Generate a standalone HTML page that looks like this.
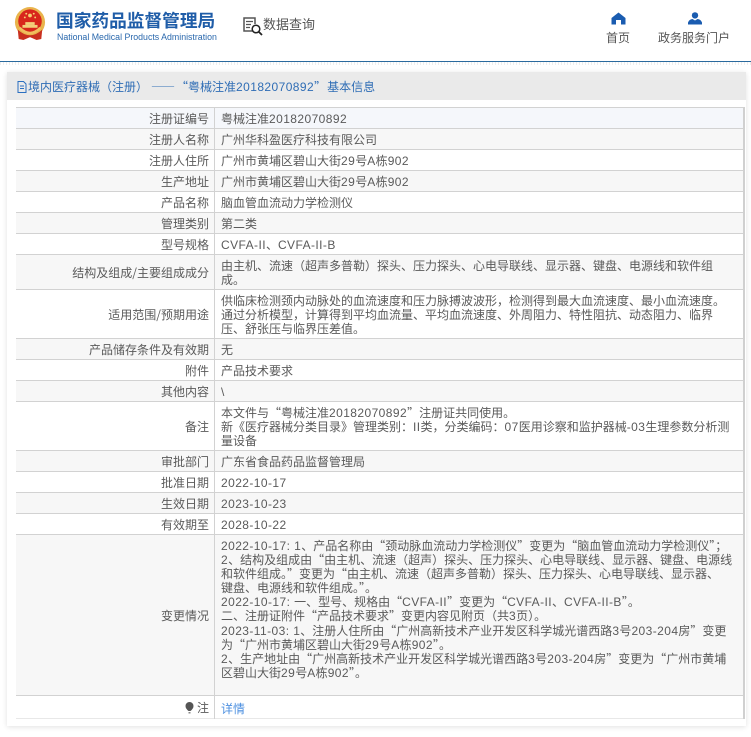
<!DOCTYPE html>
<html lang="zh-CN">
<head>
<meta charset="utf-8">
<title>国家药品监督管理局</title>
<style>
html,body{margin:0;padding:0;background:#fff;}
body{position:relative;width:751px;height:737px;overflow:hidden;font-family:"Noto Sans CJK SC","Liberation Sans",sans-serif;font-size:12px;color:#5a5a5a;}
i{font-style:normal;font-family:"Liberation Sans",sans-serif;letter-spacing:.42px;}
.a{position:absolute;white-space:nowrap;}
.r{position:absolute;left:16px;width:729px;box-sizing:border-box;border-bottom:1px solid #d2d2d2;}
.g{background:#f7f7f7;}
.r .l{position:absolute;right:calc(100% - 193px);white-space:nowrap;line-height:14px;top:50%;margin-top:-6px;}
.t{position:absolute;left:205px;white-space:nowrap;line-height:14.1px;}
</style>
</head>
<body>
<!-- emblem -->
<svg class="a" style="left:14px;top:7px" width="32" height="34" viewBox="0 0 34 36">
<circle cx="17" cy="16" r="16" fill="#e9b44c"/>
<circle cx="17" cy="15" r="12.5" fill="#d8261c"/>
<path d="M4 24Q17 36 30 24L29 34 24 35 17 32 10 35 5 34Z" fill="#c9301f"/>
<path d="M6 22Q17 33 28 22" fill="none" stroke="#f0c060" stroke-width="2.5"/>
<rect x="9" y="19" width="16" height="3" fill="#f3cf7a"/>
<rect x="12" y="16" width="10" height="3" fill="#f3cf7a"/>
<circle cx="17" cy="9" r="2" fill="#f6d271"/>
<circle cx="11.5" cy="11" r="1" fill="#f6d271"/>
<circle cx="22.5" cy="11" r="1" fill="#f6d271"/>
<circle cx="13" cy="7" r="1" fill="#f6d271"/>
<circle cx="21" cy="7" r="1" fill="#f6d271"/>
</svg>
<div class="a" style="left:56px;top:8px;font-size:17.7px;line-height:24px;font-weight:bold;color:#1f5da8">国家药品监督管理局</div>
<div class="a" style="left:57px;top:31px;font-family:'Liberation Sans',sans-serif;font-size:8.8px;line-height:13px;color:#2a68ad">National Medical Products Administration</div>

<!-- search icon -->
<svg class="a" style="left:242px;top:16px" width="22" height="21" viewBox="0 0 22 21" fill="none" stroke="#555">
<path d="M11 15H2V2H13V8" stroke-width="1.5"/>
<path d="M4 5.500H11M4 8.500H9M4 11.500H8" stroke-width="1.2"/>
<circle cx="14" cy="13" r="3.800" stroke="#222" stroke-width="1.500"/>
<path d="M17 16L20 19" stroke="#222" stroke-width="1.800"/>
</svg>
<div class="a" style="left:263px;top:14px;font-size:13px;line-height:20px;color:#555">数据查询</div>

<!-- nav -->
<svg class="a" style="left:611px;top:12px" width="15" height="13" viewBox="0 0 15 13"><path d="M7.500 0.500L14.500 6V12.500H10V8H5V12.500H.5V6Z" fill="#1a5cb0"/></svg>
<div class="a" style="left:606px;top:30px;font-size:12px;line-height:16px;color:#555">首页</div>
<svg class="a" style="left:688px;top:12px" width="14" height="13" viewBox="0 0 14 13"><circle cx="7" cy="3.400" r="3.200" fill="#1a5cb0"/><path d="M0 12.500V10.500Q1 7.500 4.500 7L7 8.500 9.500 7Q13 7.500 14 10.500V12.500Z" fill="#1a5cb0"/></svg>
<div class="a" style="left:658px;top:30px;font-size:12px;line-height:16px;color:#555">政务服务门户</div>

<!-- header line -->
<div class="a" style="left:0;top:61px;width:751px;height:1px;background:#2a6a9e"></div>
<div class="a" style="left:0;top:62px;width:751px;height:3px;background:repeating-linear-gradient(90deg,#eee 0 1px,#fff 1px 3px)"></div>

<!-- panel -->
<div class="a" style="left:7px;top:72px;width:739px;height:654px;background:#fff;box-shadow:0 1px 5px rgba(0,0,0,.12)"></div>
<div class="a" style="left:7px;top:72px;width:739px;height:28px;background:#eaeaea"></div>
<svg class="a" style="left:17px;top:81px" width="10" height="12" viewBox="0 0 10 12" fill="none" stroke="#2a6fc0"><path d="M1 .5H6.500L9 3V11.500H1ZM3 5H7M3 7.500H7"/></svg>
<div class="a" style="left:28px;top:78px;font-size:12px;line-height:17px;color:#2f6db5">境内医疗器械（注册）<span style="margin-left:3px;letter-spacing:1px">——</span>“粤械注准<i>20182070892</i>”<span style="margin-left:1px">基本信息</span></div>

<!-- table -->
<div class="a" style="left:16px;top:107px;width:729px;height:1px;background:#d2d2d2"></div>
<div class="r" style="top:108px;height:21px;background:#f5f7fb"><span class="l">注册证编号</span><div class="t" style="top:4px">粤械注准<i>20182070892</i></div></div>
<div class="r g" style="top:129px;height:21px"><span class="l">注册人名称</span><div class="t" style="top:4px">广州华科盈医疗科技有限公司</div></div>
<div class="r" style="top:150px;height:21px"><span class="l">注册人住所</span><div class="t" style="top:4px">广州市黄埔区碧山大街<i>29</i>号<i>A</i>栋<i>902</i></div></div>
<div class="r g" style="top:171px;height:21px"><span class="l">生产地址</span><div class="t" style="top:4px">广州市黄埔区碧山大街<i>29</i>号<i>A</i>栋<i>902</i></div></div>
<div class="r" style="top:192px;height:21px"><span class="l">产品名称</span><div class="t" style="top:4px">脑血管血流动力学检测仪</div></div>
<div class="r g" style="top:213px;height:21px"><span class="l">管理类别</span><div class="t" style="top:4px">第二类</div></div>
<div class="r" style="top:234px;height:21px"><span class="l">型号规格</span><div class="t" style="top:4px"><i>CVFA-II</i>、<i>CVFA-II-B</i></div></div>
<div class="r g" style="top:255px;height:35px"><span class="l">结构及组成/主要组成成分</span><div class="t" style="top:4px">由主机、流速（超声多普勒）探头、压力探头、心电导联线、显示器、键盘、电源线和软件组<br>成。</div></div>
<div class="r" style="top:290px;height:49px"><span class="l">适用范围/预期用途</span><div class="t" style="top:4px">供临床检测颈内动脉处的血流速度和压力脉搏波波形，检测得到最大血流速度、最小血流速度。<br>通过分析模型，计算得到平均血流量、平均血流速度、外周阻力、特性阻抗、动态阻力、临界<br>压、舒张压与临界压差值。</div></div>
<div class="r g" style="top:339px;height:21px"><span class="l">产品储存条件及有效期</span><div class="t" style="top:4px">无</div></div>
<div class="r" style="top:360px;height:21px"><span class="l">附件</span><div class="t" style="top:4px">产品技术要求</div></div>
<div class="r g" style="top:381px;height:21px"><span class="l">其他内容</span><div class="t" style="top:4px"><i>\</i></div></div>
<div class="r" style="top:402px;height:49px"><span class="l">备注</span><div class="t" style="top:4px">本文件与“粤械注准<i>20182070892</i>”注册证共同使用。<br>新《医疗器械分类目录》管理类别：<i>II</i>类，分类编码：<i>07</i>医用诊察和监护器械<i>-03</i>生理参数分析测<br>量设备</div></div>
<div class="r g" style="top:451px;height:21px"><span class="l">审批部门</span><div class="t" style="top:4px">广东省食品药品监督管理局</div></div>
<div class="r" style="top:472px;height:21px"><span class="l">批准日期</span><div class="t" style="top:4px"><i>2022-10-17</i></div></div>
<div class="r g" style="top:493px;height:21px"><span class="l">生效日期</span><div class="t" style="top:4px"><i>2023-10-23</i></div></div>
<div class="r" style="top:514px;height:21px"><span class="l">有效期至</span><div class="t" style="top:4px"><i>2028-10-22</i></div></div>
<div class="r g" style="top:535px;height:161px"><span class="l">变更情况</span><div class="t" style="top:4px"><i>2022-10-17: 1</i>、产品名称由“颈动脉血流动力学检测仪”变更为“脑血管血流动力学检测仪”；<br><i>2</i>、结构及组成由“由主机、流速（超声）探头、压力探头、心电导联线、显示器、键盘、电源线<br>和软件组成。”变更为“由主机、流速（超声多普勒）探头、压力探头、心电导联线、显示器、<br>键盘、电源线和软件组成。”。<br><i>2022-10-17: </i>一、型号、规格由“<i>CVFA-II</i>”变更为“<i>CVFA-II</i>、<i>CVFA-II-B</i>”。<br>二、注册证附件“产品技术要求”变更内容见附页（共<i>3</i>页）。<br><i>2023-11-03: 1</i>、注册人住所由“广州高新技术产业开发区科学城光谱西路<i>3</i>号<i>203-204</i>房”变更<br>为“广州市黄埔区碧山大街<i>29</i>号<i>A</i>栋<i>902</i>”。<br><i>2</i>、生产地址由“广州高新技术产业开发区科学城光谱西路<i>3</i>号<i>203-204</i>房”变更为“广州市黄埔<br>区碧山大街<i>29</i>号<i>A</i>栋<i>902</i>”。</div></div>
<div class="r" style="top:696px;height:23px;border-bottom-color:#e8e8e8"><span class="l">注</span><div class="t" style="top:6px;color:#4d90e0">详情</div>
<svg style="position:absolute;left:169px;top:6px" width="9" height="12" viewBox="0 0 9 12"><path d="M4.500 0A4 4 0 0 1 8.500 4Q8.500 6.500 5.500 9H3.500Q.5 6.500 .5 4A4 4 0 0 1 4.500 0Z" fill="#555"/><rect x="3.500" y="10" width="2" height="1.500" fill="#888"/></svg></div>
<!-- vertical lines -->
<div class="a" style="left:214px;top:107px;width:1px;height:612px;background:#d2d2d2"></div>
<div class="a" style="left:743px;top:107px;width:2px;height:612px;background:#d0d0d0"></div>
</body>
</html>
